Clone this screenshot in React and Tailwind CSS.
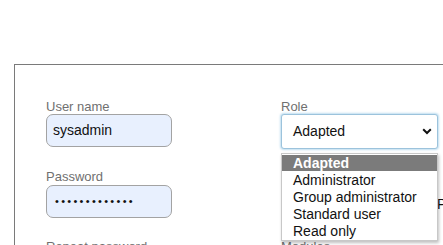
export default function App() {
  const options = ["Adapted", "Administrator", "Group administrator", "Standard user", "Read only"];
  return (
    <div className="relative h-[245px] w-[443px] overflow-hidden bg-white font-['Liberation_Sans',Arial,sans-serif]">
      <div className="pl-[14px] pt-[64px]">
        <div className="h-[300px] border-l border-t border-[#7a7a7a] pl-[31px] pt-[34px]">
          <div className="flex">
            {/* left column */}
            <div className="w-[126px] shrink-0">
              <div className="h-[15px] text-[13px] leading-[15px] text-[#707070]">User name</div>
              <div className="flex h-[33px] items-center rounded-[7px] border border-[#a3a3a3] bg-[#e8f0fe] pl-[6px] text-[14px] text-[#111]">
                sysadmin
              </div>
              <div className="mt-[22px] h-[15px] text-[13px] leading-[15px] text-[#707070]">Password</div>
              <div className="mt-[1px] flex h-[33px] items-center rounded-[7px] border border-[#a3a3a3] bg-[#e8f0fe] pl-[8px] text-[11px] tracking-[2.3px] text-[#111]">
                •••••••••••••
              </div>
              <div className="mt-[21px] h-[15px] whitespace-nowrap text-[13px] leading-[15px] text-[#707070]">Repeat password</div>
            </div>
            {/* right column */}
            <div className="relative ml-[109px] w-[157px] shrink-0">
              <div className="h-[15px] text-[13px] leading-[15px] text-[#707070]">Role</div>
              <div className="flex h-[35px] items-center justify-between rounded-[3px] border border-[#9cc3dc] bg-white pl-[11px] pr-[4px] text-[14px] text-[#111] shadow-[0_0_2px_1px_rgba(150,200,230,0.6)]">
                <span>Adapted</span>
                <svg width="10" height="7" viewBox="0 0 10 7" className="mr-[1px]">
                  <path d="M1.2 1.3 L5 5 L8.8 1.3" fill="none" stroke="#111" strokeWidth="2" />
                </svg>
              </div>
              <div className="h-[90px]" />
              <div className="h-[15px] text-[13px] leading-[15px] text-[#707070]">Modules</div>

              {/* open dropdown list */}
              <div className="absolute left-0 top-[54px] z-10 w-[157px] border border-[#c8c8c8] bg-white pb-[1px] pt-[1px] shadow-[1px_2px_3px_rgba(0,0,0,0.25)]">
                {options.map((o, i) => (
                  <div
                    key={o}
                    className={
                      i === 0
                        ? "h-[16px] bg-[#7b7b7b] pl-[11px] text-[14px] font-bold leading-[16px] text-white"
                        : "mt-[1px] h-[16px] pl-[11px] text-[14px] leading-[16px] text-[#111]"
                    }
                  >
                    {o}
                  </div>
                ))}
              </div>
            </div>
            {/* third column, cut off */}
            <div className="ml-[-1px] shrink-0 pt-[97px] text-[14px] leading-[16px] text-[#111]">
              Permissions
            </div>
          </div>
        </div>
      </div>
    </div>
  );
}
